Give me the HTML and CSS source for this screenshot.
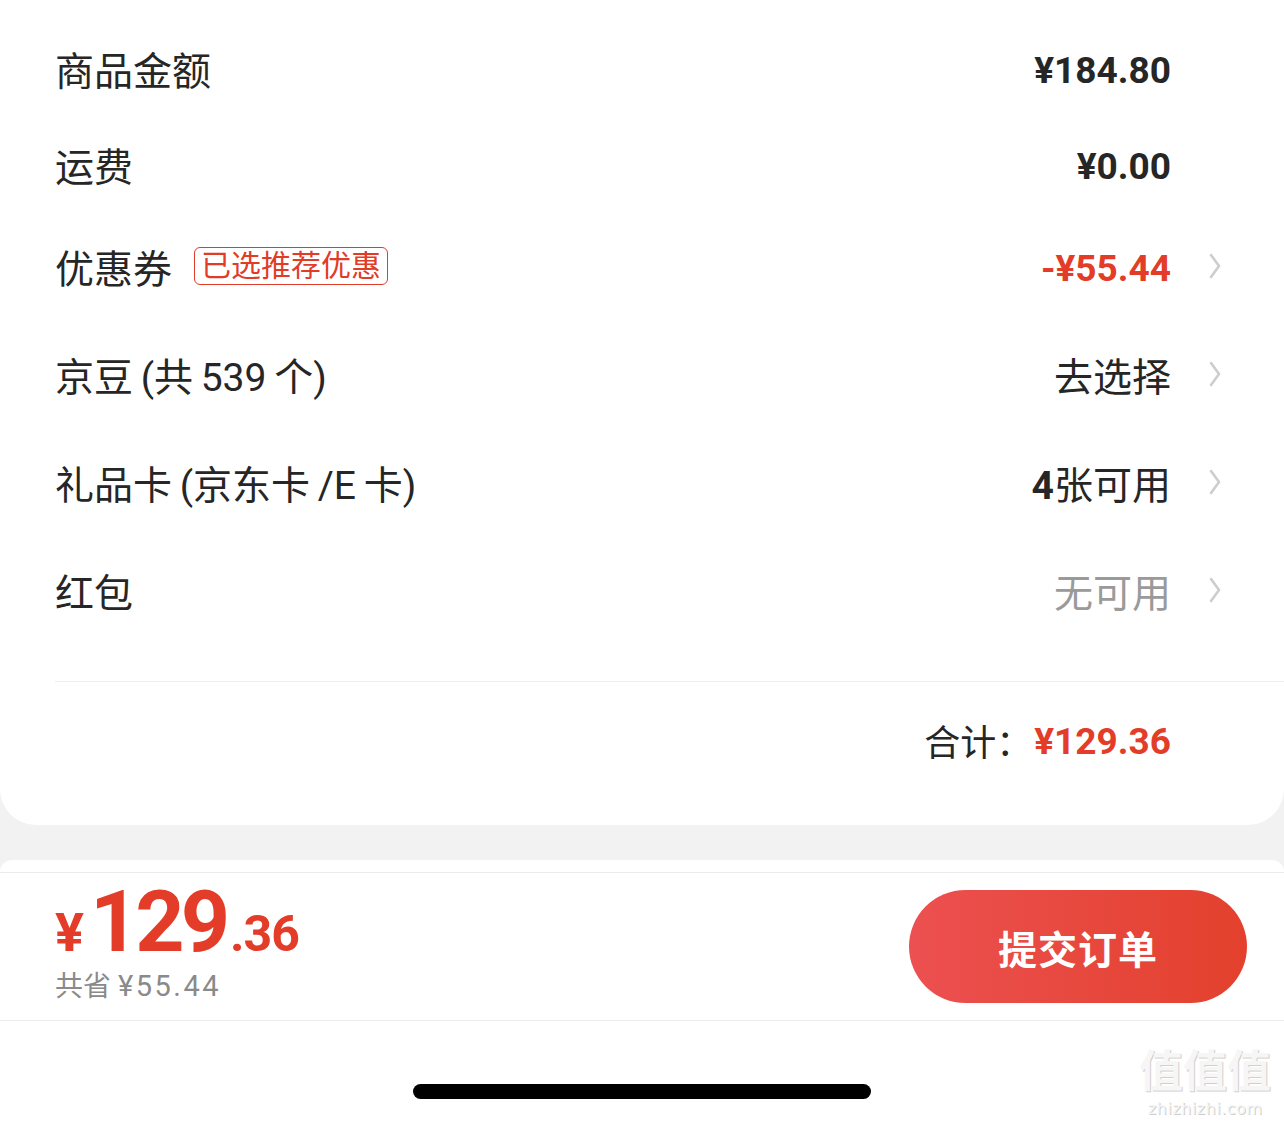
FILE: index.html
```html
<!DOCTYPE html>
<html lang="zh-CN">
<head>
<meta charset="utf-8">
<title>确认订单</title>
<link rel="stylesheet" href="styles.css">
</head>
<body>
<section class="card">
  <div class="row short">
    <div class="label">商品金额</div>
    <div class="value num">¥184.80</div>
    <div class="chev none"><svg viewBox="0 0 14 28"><path d="M3 3 L11 14 L3 25"/></svg></div>
  </div>
  <div class="row short">
    <div class="label">运费</div>
    <div class="value num">¥0.00</div>
    <div class="chev none"><svg viewBox="0 0 14 28"><path d="M3 3 L11 14 L3 25"/></svg></div>
  </div>
  <div class="row">
    <div class="label">优惠券<span class="tag">已选推荐优惠</span></div>
    <div class="value num red">-¥55.44</div>
    <div class="chev"><svg viewBox="0 0 14 28"><path d="M3 3 L11 14 L3 25"/></svg></div>
  </div>
  <div class="row">
    <div class="label">京豆 (共 539 个)</div>
    <div class="value">去选择</div>
    <div class="chev"><svg viewBox="0 0 14 28"><path d="M3 3 L11 14 L3 25"/></svg></div>
  </div>
  <div class="row">
    <div class="label">礼品卡 (京东卡 /E 卡)</div>
    <div class="value"><span class="num">4</span>张可用</div>
    <div class="chev"><svg viewBox="0 0 14 28"><path d="M3 3 L11 14 L3 25"/></svg></div>
  </div>
  <div class="row">
    <div class="label">红包</div>
    <div class="value gray">无可用</div>
    <div class="chev"><svg viewBox="0 0 14 28"><path d="M3 3 L11 14 L3 25"/></svg></div>
  </div>
  <div class="divider"></div>
  <div class="total">
    <span class="total-label">合计：</span>
    <span class="num red total-num">¥129.36</span>
  </div>
</section>

<div class="peek"></div>

<footer class="bar">
  <div class="pay">
    <div class="pay-line"><span class="cur">¥</span><span class="int">129</span><span class="dec">.36</span></div>
    <div class="save">共省 <span class="save-num">¥55.44</span></div>
  </div>
  <button class="submit">提交订单</button>
</footer>

<div class="home"><div class="indicator"></div></div>

<div class="watermark">
  <div class="wm-big">值值值</div>
  <div class="wm-small">zhizhizhi.com</div>
</div>
</body>
</html>
```

FILE: styles.css
```css
* { box-sizing: border-box; margin: 0; padding: 0; }
html, body { width: 1284px; height: 1124px; overflow: hidden; }
body {
  background: #f2f2f2;
  font-family: Roboto, "Noto Sans CJK SC", sans-serif;
  color: #262626;
  display: flex;
  flex-direction: column;
  position: relative;
}

.card {
  background: #fff;
  border-radius: 0 0 36px 36px;
  padding: 20px 0 30px 55px;
  height: 825px;
  flex: none;
}

.row {
  display: flex;
  align-items: center;
  height: 108px;
  margin-right: 62px;
  font-size: 39px;
}
.row.short { height: 96px; }

.label {
  flex: 1;
  display: flex;
  align-items: center;
  white-space: pre;
  word-spacing: -2px;
}

.tag {
  margin-left: 22px;
  height: 38px;
  border: 1.5px solid #e03c28;
  border-radius: 6px;
  color: #e03c28;
  font-size: 30px;
  line-height: 1;
  padding: 0 6px;
  display: flex;
  align-items: center;
  word-spacing: 0;
}

.value { white-space: nowrap; }
.num { font-weight: 700; font-size: 37px; }
.value.num { padding-top: 4px; }
.value .num { font-size: 39px; }
.red { color: #e33c28; }
.gray { color: #9a9a9a; }

.chev {
  width: 51px;
  display: flex;
  justify-content: flex-end;
  align-items: center;
}
.chev svg { width: 14px; height: 28px; }
.chev path {
  fill: none;
  stroke: #cdcdcd;
  stroke-width: 2.6;
  stroke-linecap: round;
  stroke-linejoin: round;
}
.chev.none svg { visibility: hidden; }

.divider {
  height: 1px;
  background: #eeeeee;
  margin-top: 37px;
}

.total {
  height: 115px;
  display: flex;
  align-items: center;
  justify-content: flex-end;
  margin-right: 113px;
}
.total-label { font-size: 36px; margin-right: 2px; }
.total-num { font-size: 37px; padding-top: 3px; }

.peek {
  flex: none;
  margin-top: 35px;
  height: 12px;
  background: #fff;
  border-radius: 30px 30px 0 0;
}

.bar {
  flex: none;
  height: 149px;
  background: #fff;
  border-top: 1px solid #ececec;
  border-bottom: 1px solid #ececec;
  display: flex;
  justify-content: space-between;
  align-items: center;
  padding: 0 37px 0 55px;
}

.pay {
  align-self: flex-start;
  margin-top: 6px;
  color: #e33c28;
}
.pay-line {
  font-size: 86px;
  line-height: 1;
  height: 86px;
  font-weight: 700;
  white-space: nowrap;
}
.cur { font-size: 54px; margin-right: 6px; }
.int { letter-spacing: -4px; }
.dec { font-size: 50px; letter-spacing: -1px; margin-left: 4px; }
.save {
  margin-top: 6px;
  font-size: 28px;
  line-height: 30px;
  color: #8a8a8a;
  white-space: pre;
}
.save-num { letter-spacing: 2.5px; font-size: 29px; }

.submit {
  width: 338px;
  height: 113px;
  border: none;
  border-radius: 57px;
  background: linear-gradient(90deg, #ec5050 0%, #e3412d 100%);
  color: #fff;
  font-family: Roboto, "Noto Sans CJK SC", sans-serif;
  font-size: 39px;
  font-weight: 700;
  letter-spacing: 1px;
}

.home {
  flex: 1;
  background: #fff;
  padding-top: 63px;
  display: flex;
  justify-content: center;
  align-items: flex-start;
}
.indicator {
  width: 458px;
  height: 15px;
  border-radius: 8px;
  background: #000;
}

.watermark {
  position: absolute;
  right: 8px;
  bottom: 6px;
  width: 142px;
  text-align: center;
  color: #f6f6f6;
  text-shadow: 1px 1px 0 #cfcfcf, -1px -1px 0 #ffffff;
  font-family: "Noto Sans CJK SC", sans-serif;
}
.wm-big {
  font-size: 44px;
  line-height: 64px;
  font-weight: 700;
  letter-spacing: 0;
}
.wm-small {
  font-family: "DejaVu Sans", sans-serif;
  font-size: 16px;
  line-height: 18px;
  letter-spacing: 0.5px;
}
```
